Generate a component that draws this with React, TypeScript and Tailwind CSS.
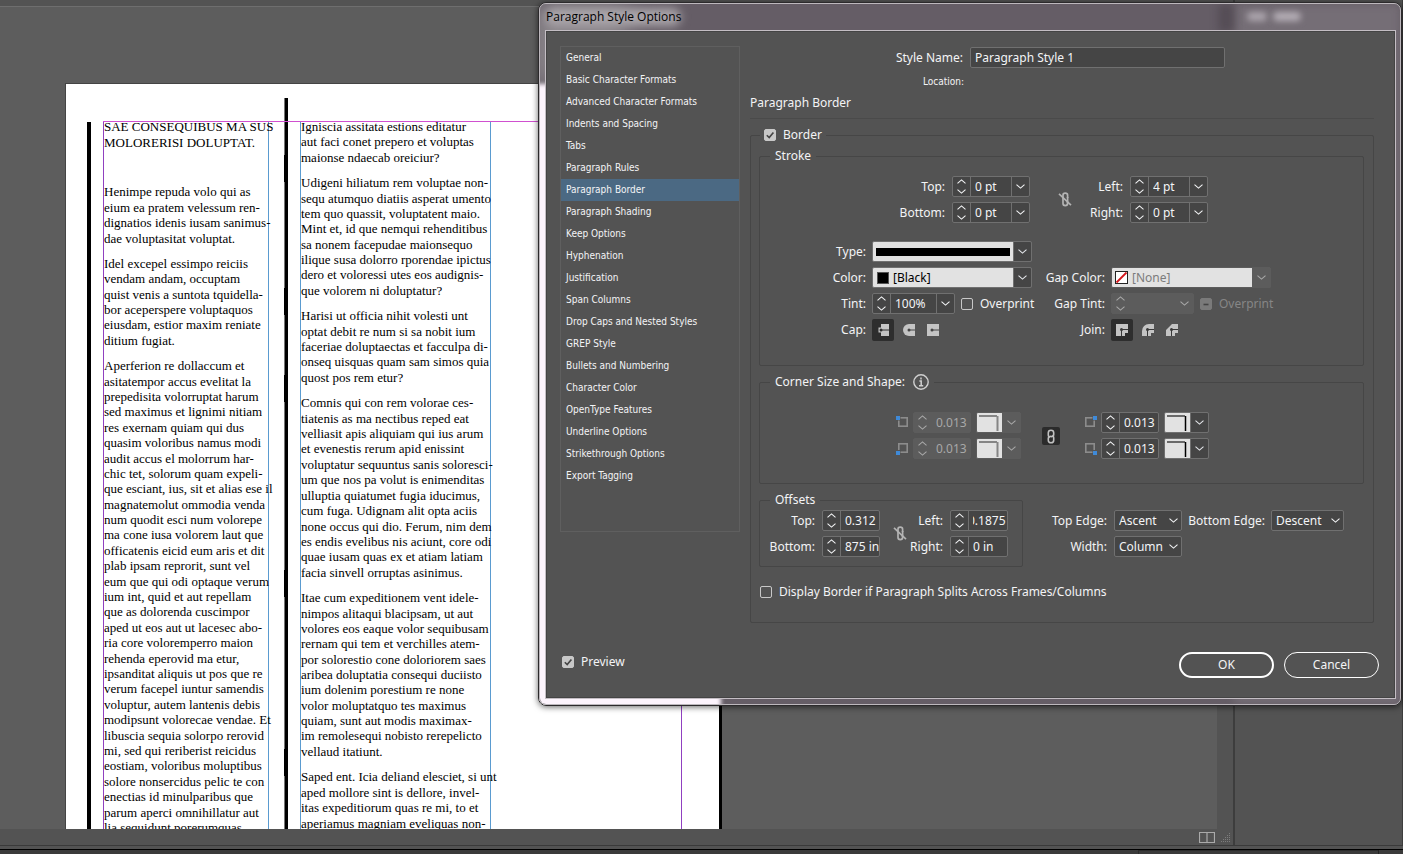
import { ReactNode } from "react";

const categories = [
  "General",
  "Basic Character Formats",
  "Advanced Character Formats",
  "Indents and Spacing",
  "Tabs",
  "Paragraph Rules",
  "Paragraph Border",
  "Paragraph Shading",
  "Keep Options",
  "Hyphenation",
  "Justification",
  "Span Columns",
  "Drop Caps and Nested Styles",
  "GREP Style",
  "Bullets and Numbering",
  "Character Color",
  "OpenType Features",
  "Underline Options",
  "Strikethrough Options",
  "Export Tagging",
];

const headline = ["SAE CONSEQUIBUS MA SUS", "MOLORERISI DOLUPTAT."];

const leftColumn = [
  [
    "Henimpe repuda volo qui as",
    "eium ea pratem velessum ren-",
    "dignatios idenis iusam sanimus-",
    "dae voluptasitat voluptat.",
  ],
  [
    "Idel excepel essimpo reiciis",
    "vendam andam, occuptam",
    "quist venis a suntota tquidella-",
    "bor aceperspere voluptaquos",
    "eiusdam, estior maxim reniate",
    "ditium fugiat.",
  ],
  [
    "Aperferion re dollaccum et",
    "asitatempor accus evelitat la",
    "prepedisita volorruptat harum",
    "sed maximus et lignimi nitiam",
    "res exernam quiam qui dus",
    "quasim voloribus namus modi",
    "audit accus el molorrum har-",
    "chic tet, solorum quam expeli-",
    "que esciant, ius, sit et alias ese il",
    "magnatemolut ommodia venda",
    "num quodit esci num volorepe",
    "ma cone iusa volorem laut que",
    "officatenis eicid eum aris et dit",
    "plab ipsam reprorit, sunt vel",
    "eum que qui odi optaque verum",
    "ium int, quid et aut repellam",
    "que as dolorenda cuscimpor",
    "aped ut eos aut ut lacesec abo-",
    "ria core voloremperro maion",
    "rehenda eperovid ma etur,",
    "ipsanditat aliquis ut pos que re",
    "verum facepel iuntur samendis",
    "voluptur, autem lantenis debis",
    "modipsunt volorecae vendae. Et",
    "libuscia sequia solorpo rerovid",
    "mi, sed qui reriberist reicidus",
    "eostiam, voloribus moluptibus",
    "solore nonsercidus pelic te con",
    "enectias id minulparibus que",
    "parum aperci omnihillatur aut",
    "lia sequidunt porerumquas",
  ],
];

const rightColumn = [
  ["Igniscia assitata estions editatur", "aut faci conet prepero et voluptas", "maionse ndaecab oreiciur?"],
  [
    "Udigeni hiliatum rem voluptae non-",
    "sequ atumquo diatiis asperat umento",
    "tem quo quassit, voluptatent maio.",
    "Mint et, id que nemqui rehenditibus",
    "sa nonem facepudae maionsequo",
    "ilique susa dolorro rporendae ipictus",
    "dero et voloressi utes eos audignis-",
    "que volorem ni doluptatur?",
  ],
  [
    "Harisi ut officia nihit volesti unt",
    "optat debit re num si sa nobit ium",
    "faceriae doluptaectas et facculpa di-",
    "onseq uisquas quam sam simos quia",
    "quost pos rem etur?",
  ],
  [
    "Comnis qui con rem volorae ces-",
    "tiatenis as ma nectibus reped eat",
    "velliasit apis aliquiam qui ius arum",
    "et evenestis rerum apid enissint",
    "voluptatur sequuntus sanis soloresci-",
    "um que nos pa volut is enimenditas",
    "ulluptia quiatumet fugia iducimus,",
    "cum fuga. Udignam alit opta aciis",
    "none occus qui dio. Ferum, nim dem",
    "es endis evelibus nis aciunt, core odi",
    "quae iusam quas ex et atiam latiam",
    "facia sinvell orruptas asinimus.",
  ],
  [
    "Itae cum expeditionem vent idele-",
    "nimpos alitaqui blacipsam, ut aut",
    "volores eos eaque volor sequibusam",
    "rernam qui tem et verchilles atem-",
    "por solorestio cone doloriorem saes",
    "aribea doluptatia consequi duciisto",
    "ium dolenim porestium re none",
    "volor moluptatquo tes maximus",
    "quiam, sunt aut modis maximax-",
    "im remolesequi nobisto rerepelicto",
    "vellaud itatiunt.",
  ],
  [
    "Saped ent. Icia deliand elesciet, si unt",
    "aped mollore sint is dellore, invel-",
    "itas expeditiorum quas re mi, to et",
    "aperiamus magniam eveliquas non-",
  ],
];

// Leading is 77px for every five lines
function Lines({ lines, overlap = false }: { lines: string[]; overlap?: boolean }) {
  return (
    <p className="relative flex shrink-0 flex-col" style={{ height: Math.round((lines.length * 77) / 5) }}>
      {overlap && <span className="absolute -left-[17px] -top-[20px] h-[27px] w-1 bg-black" />}
      {lines.map((line) => (
        <span key={line} className="flex min-h-0 flex-1 items-center whitespace-nowrap leading-none">
          {line}
        </span>
      ))}
    </p>
  );
}

function Chevron({ up = false }: { up?: boolean }) {
  return (
    <svg width="9" height="5" viewBox="0 0 9 5" fill="none" stroke="currentColor" strokeWidth="1.1">
      <path d={up ? "M0.5 4.3 4.5 0.9 8.5 4.3" : "M0.5 0.7 4.5 4.1 8.5 0.7"} />
    </svg>
  );
}

function Steps({ disabled = false }: { disabled?: boolean }) {
  return (
    <span className="flex w-[17px] shrink-0 flex-col items-center justify-center gap-[5px]">
      <button type="button" aria-label="Increase" disabled={disabled}>
        <Chevron up />
      </button>
      <button type="button" aria-label="Decrease" disabled={disabled}>
        <Chevron />
      </button>
    </span>
  );
}

type NumberBoxProps = {
  id: string;
  value: string;
  label?: string;
  menu?: boolean;
  disabled?: boolean;
  size?: string;
  scroll?: number;
};

function NumberBox({ id, value, label, menu, disabled, size = "w-[58px]", scroll = 0 }: NumberBoxProps) {
  const frame = disabled ? "border-[#5c5c5c] bg-[#5c5c5c] text-[#a8a8a8]" : "border-[#707070] bg-[#454545] text-gray-100";
  const line = disabled ? "border-[#5c5c5c]" : "border-[#707070]";
  return (
    <span className={`flex h-[21px] shrink-0 rounded-xs border ${frame} ${size}`}>
      <Steps disabled={disabled} />
      <input
        id={id}
        aria-label={label}
        defaultValue={value}
        disabled={disabled}
        ref={(el) => {
          if (el) el.scrollLeft = scroll;
        }}
        className={`w-0 min-w-0 flex-1 border-l pl-1 leading-[19px] outline-none ${line}`}
      />
      {menu && (
        <button
          type="button"
          aria-label="Presets"
          disabled={disabled}
          className={`flex w-[18px] shrink-0 items-center justify-center border-l ${line}`}
        >
          <Chevron />
        </button>
      )}
    </span>
  );
}

// Light drop-down with a drawn preview on its face
type SwatchSelectProps = {
  id: string;
  label?: string;
  options: string[];
  size?: string;
  disabled?: boolean;
  text?: string;
  children: ReactNode;
};

function SwatchSelect({ id, label, options, size = "w-[160px]", disabled, text = "", children }: SwatchSelectProps) {
  return (
    <span className={`relative flex h-[21px] shrink-0 ${size}`}>
      <select
        id={id}
        aria-label={label}
        disabled={disabled}
        className={`h-full w-full appearance-none rounded-xs border bg-[#e2e2e2] pl-5 opacity-100 outline-none ${
          disabled ? "border-[#5c5c5c]" : "border-[#707070]"
        } ${text}`}
      >
        {options.map((o) => (
          <option key={o}>{o}</option>
        ))}
      </select>
      <span className="pointer-events-none absolute inset-y-0 left-0 right-[19px] flex items-center">{children}</span>
      <span
        className={`pointer-events-none absolute inset-y-0 right-0 flex w-[19px] items-center justify-center rounded-r-xs border ${
          disabled ? "border-[#5c5c5c] bg-[#5c5c5c] text-[#a8a8a8]" : "border-[#707070] bg-[#454545] text-gray-200"
        }`}
      >
        <Chevron />
      </span>
    </span>
  );
}

function CornerSelect({ id, disabled }: { id: string; disabled?: boolean }) {
  return (
    <SwatchSelect id={id} label="Corner shape" options={[""]} size="w-[45px]" disabled={disabled}>
      <svg className="ml-[2px]" width="22" height="17" viewBox="0 0 22 17" fill="none">
        <path d="M1 2h18" stroke={disabled ? "#858585" : "#6a6a6a"} strokeWidth="2" />
        <path d="M19.5 2v15" stroke={disabled ? "#858585" : "#000"} strokeWidth={disabled ? 2 : 1.5} />
      </svg>
    </SwatchSelect>
  );
}

function PlainSelect({ id, value, size }: { id: string; value: string; size: string }) {
  return (
    <span className={`relative flex h-[21px] shrink-0 ${size}`}>
      <select
        id={id}
        className="h-full w-full appearance-none rounded-xs border border-[#707070] bg-[#454545] pl-1 text-gray-100 outline-none"
      >
        <option>{value}</option>
      </select>
      <span className="pointer-events-none absolute inset-y-0 right-1 flex items-center">
        <Chevron />
      </span>
    </span>
  );
}

function Check({ id, label, checked, disabled }: { id: string; label: string; checked?: boolean; disabled?: boolean }) {
  return (
    <span className="flex items-center gap-[7px]">
      <span className="relative flex">
        <input
          id={id}
          type="checkbox"
          defaultChecked={checked}
          disabled={disabled}
          className="size-3 appearance-none rounded-xs border border-[#c8c8c8] checked:bg-[#c8c8c8] disabled:border-[#7a7a7a] disabled:bg-[#7a7a7a]"
        />
        <svg className="pointer-events-none absolute inset-0" width="12" height="12" viewBox="0 0 12 12" fill="none" stroke="#444">
          {checked && <path d="M2.8 6.2 5.2 8.6 9.4 3.4" strokeWidth="1.6" />}
          {disabled && <path d="M3.5 6.5h5" strokeWidth="1.6" />}
        </svg>
      </span>
      <label htmlFor={id} className={disabled ? "text-[#868686]" : ""}>
        {label}
      </label>
    </span>
  );
}

function Label({ id, size, children }: { id: string; size: string; children: string }) {
  return (
    <label htmlFor={id} className={`shrink-0 whitespace-nowrap text-right ${size}`}>
      {children}
    </label>
  );
}

function Row({ children }: { children: ReactNode }) {
  return <div className="flex h-[26px] items-center pb-px">{children}</div>;
}

function Unlinked() {
  return (
    <button type="button" aria-label="Make all settings the same" className="flex size-4 items-center justify-center">
      <svg width="14" height="16" viewBox="0 0 14 16" fill="none" stroke="#b4b4b4" strokeWidth="1.7">
        <path d="M5 5V3.2C5 2 5.8 1.2 7.2 1.2S9.6 2 9.6 3.2V6" />
        <path d="M5 9v2.6c0 1.2.8 2 2.2 2s2.4-.8 2.4-2V9.8" />
        <path d="M5 5v4M9.6 5v6" />
        <path d="M1 1.8 13 13.2" strokeWidth="1.6" />
      </svg>
    </button>
  );
}

function Linked() {
  return (
    <button type="button" aria-label="Make all corners the same" className="flex size-[18px] items-center justify-center rounded-xs bg-[#2b2b2b]">
      <svg width="10" height="15" viewBox="0 0 10 15" fill="none" stroke="#c0c0c0" strokeWidth="1.6">
        <path d="M3.6 8.4C2.6 8 2.3 7.3 2.3 6.2V3.8C2.3 2.2 3.4 1.2 5 1.2s2.7 1 2.7 2.6v1.6c0 1.6-1 2.2-2.7 2.2" />
        <path d="M6.4 6.6c1 .4 1.3 1.1 1.3 2.2v2.4c0 1.6-1.1 2.6-2.7 2.6s-2.7-1-2.7-2.6V9.6C2.3 8 3.3 7.4 5 7.4" />
      </svg>
    </button>
  );
}

// Square with its active corner marked
function CornerIcon({ right, bottom }: { right?: boolean; bottom?: boolean }) {
  return (
    <svg width="12" height="13" viewBox="0 0 12 13" className="shrink-0">
      <rect x={right ? 0.8 : 2.8} y={bottom ? 1.8 : 1.8} width="8.4" height="8.4" fill="none" stroke="#8c8c8c" strokeWidth="1.6" />
      <rect x={right ? 7.5 : -0.5} y={bottom ? 8 : -0.5} width="5" height="5" fill="#535353" />
      <rect x={right ? 8 : 0} y={bottom ? 9 : 0} width="4" height="4" fill="#3f8ad8" />
    </svg>
  );
}

function IconButton({ label, active, children }: { label: string; active?: boolean; children: ReactNode }) {
  return (
    <button
      type="button"
      aria-label={label}
      className={`flex h-[22px] items-center justify-center rounded-xs ${active ? "w-[22px] bg-[#2e2e2e]" : "w-[18px]"}`}
    >
      <svg width="14" height="14" viewBox="0 0 14 14" fill="#c4c4c4">
        {children}
      </svg>
    </button>
  );
}

function CapIcons() {
  return (
    <span className="flex items-center gap-[6px]">
      <IconButton label="Butt cap" active>
        <path d="M5 1h8v12H5zM2.5 4.5h4v5h-4z" />
        <circle cx="5" cy="7" r="1.5" fill="#2e2e2e" />
        <path d="M5 7h8" stroke="#2e2e2e" />
      </IconButton>
      <IconButton label="Round cap">
        <path d="M13 1H7a6 6 0 0 0 0 12h6z" />
        <circle cx="7" cy="7" r="1.5" fill="#444" />
        <path d="M7 7h6" stroke="#444" />
      </IconButton>
      <IconButton label="Projecting cap">
        <path d="M1 1h12v12H1z" />
        <circle cx="6" cy="7" r="1.5" fill="#444" />
        <path d="M6 7h7" stroke="#444" />
      </IconButton>
    </span>
  );
}

function JoinIcons() {
  const centre = (
    <>
      <circle cx="6.5" cy="6.5" r="1.5" fill="#383838" />
      <path d="M13 6.5H6.5V13" fill="none" stroke="#383838" />
    </>
  );
  return (
    <span className="flex items-center gap-[6px]">
      <IconButton label="Miter join" active>
        <path d="M1 1h12v9h-3v3H1z" />
        {centre}
      </IconButton>
      <IconButton label="Round join">
        <path d="M13 1H8a7 7 0 0 0-7 7v5h9v-3h3z" />
        {centre}
      </IconButton>
      <IconButton label="Bevel join">
        <path d="M13 1H7L1 7v6h9v-3h3z" />
        {centre}
      </IconButton>
    </span>
  );
}

function StrokeGroup() {
  return (
    <fieldset className="min-w-0 rounded-xs border border-[#464646] pb-[22px]">
      <legend className="ml-[10px] h-4 px-[5px] leading-4">Stroke</legend>
      <div className="flex items-center pt-[10px]">
        <div>
          <Row>
            <Label id="stroke-top" size="w-[185px] mr-[7px]">Top:</Label>
            <NumberBox id="stroke-top" value="0 pt" menu size="w-[78px]" />
          </Row>
          <Row>
            <Label id="stroke-bottom" size="w-[185px] mr-[7px]">Bottom:</Label>
            <NumberBox id="stroke-bottom" value="0 pt" menu size="w-[78px]" />
          </Row>
        </div>
        <div className="ml-[27px]">
          <Unlinked />
        </div>
        <div>
          <Row>
            <Label id="stroke-left" size="w-[50px] mr-[7px]">Left:</Label>
            <NumberBox id="stroke-left" value="4 pt" menu size="w-[78px]" />
          </Row>
          <Row>
            <Label id="stroke-right" size="w-[50px] mr-[7px]">Right:</Label>
            <NumberBox id="stroke-right" value="0 pt" menu size="w-[78px]" />
          </Row>
        </div>
      </div>
      <div className="flex pt-[13px]">
        <div className="w-[272px]">
          <Row>
            <Label id="type" size="w-[106px] mr-[6px]">Type:</Label>
            <SwatchSelect id="type" options={[""]}>
              <span className="ml-1 mr-[3px] h-2 flex-1 bg-black" />
            </SwatchSelect>
          </Row>
          <Row>
            <Label id="color" size="w-[106px] mr-[6px]">Color:</Label>
            <SwatchSelect id="color" options={["[Black]"]} text="text-black">
              <span className="ml-[5px] size-3 border border-[#555] bg-black" />
            </SwatchSelect>
          </Row>
          <Row>
            <Label id="tint" size="w-[106px] mr-[6px]">Tint:</Label>
            <NumberBox id="tint" value="100%" menu size="w-[83px] mr-[6px]" />
            <Check id="overprint" label="Overprint" />
          </Row>
          <Row>
            <span className="mr-[6px] w-[106px] text-right">Cap:</span>
            <CapIcons />
          </Row>
        </div>
        <div>
          <Row>{null}</Row>
          <Row>
            <Label id="gap-color" size="w-[73px] mr-[6px]">Gap Color:</Label>
            <SwatchSelect id="gap-color" options={["[None]"]} disabled text="text-[#7c7c7c]">
              <svg className="ml-1" width="13" height="13" viewBox="0 0 13 13">
                <rect x="0.5" y="0.5" width="12" height="12" fill="#fff" stroke="#222" />
                <path d="M1.5 11.5 11.5 1.5" stroke="#d4151b" strokeWidth="1.8" />
              </svg>
            </SwatchSelect>
          </Row>
          <Row>
            <Label id="gap-tint" size="w-[73px] mr-[6px]">Gap Tint:</Label>
            <NumberBox id="gap-tint" value="" menu disabled size="w-[83px] mr-[6px]" />
            <Check id="gap-overprint" label="Overprint" disabled />
          </Row>
          <Row>
            <span className="mr-[6px] w-[73px] text-right">Join:</span>
            <JoinIcons />
          </Row>
        </div>
      </div>
    </fieldset>
  );
}

function CornerGroup() {
  return (
    <fieldset className="mt-2 min-w-0 rounded-xs border border-[#464646] pb-[21px]">
      <legend className="ml-[10px] flex h-4 items-center gap-2 px-[5px] leading-4">
        Corner Size and Shape:
        <svg width="16" height="16" viewBox="0 0 16 16" fill="none" stroke="#d0d0d0">
          <circle cx="8" cy="8" r="7.2" strokeWidth="1.4" />
          <path d="M6.4 7h1.8v4.6M6 11.7h4.2M8 3.6v1.8" strokeWidth="1.5" />
        </svg>
      </legend>
      <div className="flex items-center pt-5">
        <div className="ml-[136px]">
          <Row>
            <CornerIcon />
            <span className="w-[5px]" />
            <NumberBox id="corner-tl" label="Top left size" value="0.013" disabled />
            <span className="w-[5px]" />
            <CornerSelect id="shape-tl" disabled />
          </Row>
          <Row>
            <CornerIcon bottom />
            <span className="w-[5px]" />
            <NumberBox id="corner-bl" label="Bottom left size" value="0.013" disabled />
            <span className="w-[5px]" />
            <CornerSelect id="shape-bl" disabled />
          </Row>
        </div>
        <div className="ml-[21px] mr-[25px]">
          <Linked />
        </div>
        <div>
          <Row>
            <CornerIcon right />
            <span className="w-1" />
            <NumberBox id="corner-tr" label="Top right size" value="0.013" />
            <span className="w-[5px]" />
            <CornerSelect id="shape-tr" />
          </Row>
          <Row>
            <CornerIcon right bottom />
            <span className="w-1" />
            <NumberBox id="corner-br" label="Bottom right size" value="0.013" />
            <span className="w-[5px]" />
            <CornerSelect id="shape-br" />
          </Row>
        </div>
      </div>
    </fieldset>
  );
}

function OffsetsGroup() {
  return (
    <div className="mt-2 flex items-start">
      <fieldset className="w-[264px] min-w-0 shrink-0 rounded-xs border border-[#464646] pb-[6px]">
        <legend className="ml-[10px] h-4 px-[5px] leading-4">Offsets</legend>
        <div className="flex items-center">
          <div>
            <Row>
              <Label id="offset-top" size="w-[55px] mr-[7px]">Top:</Label>
              <NumberBox id="offset-top" value="0.312" />
            </Row>
            <Row>
              <Label id="offset-bottom" size="w-[55px] mr-[7px]">Bottom:</Label>
              <NumberBox id="offset-bottom" value="0.1875 in" scroll={99} />
            </Row>
          </div>
          <div className="ml-3">
            <Unlinked />
          </div>
          <div>
            <Row>
              <Label id="offset-left" size="w-[35px] mr-[7px]">Left:</Label>
              <NumberBox id="offset-left" value="0.1875 in" scroll={5} />
            </Row>
            <Row>
              <Label id="offset-right" size="w-[35px] mr-[7px]">Right:</Label>
              <NumberBox id="offset-right" value="0 in" />
            </Row>
          </div>
        </div>
      </fieldset>
      <div className="pt-4">
        <Row>
          <Label id="top-edge" size="w-[84px] mr-[7px]">Top Edge:</Label>
          <PlainSelect id="top-edge" value="Ascent" size="w-[68px]" />
          <Label id="bottom-edge" size="w-[83px] mr-[6px]">Bottom Edge:</Label>
          <PlainSelect id="bottom-edge" value="Descent" size="w-[73px]" />
        </Row>
        <Row>
          <Label id="width" size="w-[84px] mr-[7px]">Width:</Label>
          <PlainSelect id="width" value="Column" size="w-[68px]" />
        </Row>
      </div>
    </div>
  );
}

function StyleDialog() {
  return (
    <div
      role="dialog"
      aria-label="Paragraph Style Options"
      className="absolute left-[538px] right-px top-[2px] rounded-lg border border-[#2c2a2c] shadow-[0_1px_6px_rgba(0,0,0,0.6)]"
    >
      <div className="relative overflow-hidden rounded-[7px] border border-[#bdb8bd] bg-[#655d66] pb-[5px] pl-[5px] pr-1">
        {/* Glass reflections of what lies behind the frame */}
        <div className="absolute -left-2 top-0 h-20 w-24 bg-[#8a858a] blur-md" />
        <div className="absolute -bottom-2 -left-2 top-20 w-[189px] bg-[#fdf4fd] blur-[2px]" />
        <div className="absolute right-0 top-0 h-full w-[166px] bg-[#756e76] blur-xs" />
        <div className="absolute right-[166px] top-0 h-7 w-4 bg-[#554d56] blur-xs" />
        <div className="absolute right-[133px] top-2 h-[9px] w-5 rounded-full bg-[#aca5ad] blur-[3px]" />
        <div className="absolute right-[99px] top-2 h-[9px] w-7 rounded-full bg-[#b5aeb6] blur-[3px]" />

        <div className="relative flex h-[26px] items-center pl-px">
          <div className="absolute left-0 top-1 h-[18px] w-[136px] rounded-full bg-[#aaa5aa] blur-[5px]" />
          <h1 className="relative font-['Open_Sans',sans-serif] text-xs text-black">Paragraph Style Options</h1>
        </div>

        <div className="relative border border-[#c4bec4] bg-[#535353]">
          <form className="border border-[#444]" onSubmit={(e) => e.preventDefault()}>
            <div className="flex gap-[10px] pl-[13px] pr-5 pt-[14px]">
              <nav className="h-[486px] w-[180px] shrink-0 border border-[#5f5f5f] font-['DejaVu_Sans_Condensed','Noto_Sans',sans-serif] text-[10px]">
                {categories.map((name) => (
                  <a
                    key={name}
                    href="#"
                    className={`flex h-[22px] items-center pl-[5px] ${name === "Paragraph Border" ? "bg-[#4b6983]" : ""}`}
                  >
                    {name}
                  </a>
                ))}
              </nav>
              <div className="min-w-0 flex-1 pt-px">
                <div className="flex items-center">
                  <Label id="style-name" size="w-[213px] mr-[7px]">Style Name:</Label>
                  <input
                    id="style-name"
                    defaultValue="Paragraph Style 1"
                    className="h-[21px] w-[255px] rounded-xs border border-[#707070] bg-[#454545] px-1 outline-none"
                  />
                </div>
                <div className="flex h-7 w-[214px] items-center justify-end font-['DejaVu_Sans_Condensed','Noto_Sans',sans-serif] text-[10px]">
                  Location:
                </div>
                <h2 className="border-b border-[#4a4a4a] pb-2 leading-[14px]">Paragraph Border</h2>
                <fieldset className="mt-2 min-w-0 rounded-xs border border-[#464646] pb-5 pl-2 pr-[9px]">
                  <legend className="ml-px flex h-4 items-center px-1 leading-4">
                    <Check id="border" label="Border" checked />
                  </legend>
                  <div className="pt-[5px]">
                    <StrokeGroup />
                    <CornerGroup />
                    <OffsetsGroup />
                    <div className="mt-[15px] flex h-5 items-center pl-px">
                      <Check id="split" label="Display Border if Paragraph Splits Across Frames/Columns" />
                    </div>
                  </div>
                </fieldset>
              </div>
            </div>
            <div className="flex items-start justify-between pb-[19px] pl-[15px] pr-[15px] pt-[29px]">
              <div className="flex h-5 items-center">
                <Check id="preview" label="Preview" checked />
              </div>
              <div className="flex gap-[10px]">
                <button type="submit" className="h-[26px] w-[95px] rounded-full border-2 border-white">
                  OK
                </button>
                <button type="button" className="h-[26px] w-[95px] rounded-full border border-white">
                  Cancel
                </button>
              </div>
            </div>
          </form>
        </div>
      </div>
    </div>
  );
}

function DocumentPage() {
  return (
    <div className="relative ml-[65px] mt-[76px] flex min-h-0 w-[657px] flex-1 items-stretch overflow-hidden border-l border-r-[3px] border-t border-l-[#444] border-r-black border-t-[#444] bg-white pl-[21px] font-['Liberation_Serif',serif] text-[13px] text-black">
      <div className="mt-[38px] flex border-l-4 border-black pl-3">
        <div className="flex w-[166px] flex-col gap-[10px] border-l border-r border-l-[#9040c0] border-r-[#5a9bd0]">
          <div className="-mt-[3px] pb-6">
            <Lines lines={headline} />
          </div>
          {leftColumn.map((lines) => (
            <Lines key={lines[0]} lines={lines} />
          ))}
        </div>
      </div>
      <div className="ml-4 mt-[14px] flex border-l-[3px] border-black pl-3 pt-6 shadow-[-1px_0_0_#777]">
        <div className="w-[191px] border-l border-r border-[#5a9bd0]">
          <div className="-mt-[3px] flex flex-col gap-[10px]">
            {rightColumn.map((lines, i) => (
              <Lines key={lines[0]} lines={lines} overlap={i > 0} />
            ))}
          </div>
        </div>
      </div>
      {/* Margin guides */}
      <div className="absolute left-[37px] right-[37px] top-[37px] h-px bg-[#d050d0]" />
      <div className="absolute bottom-0 right-[37px] top-[37px] w-px bg-[#9040c0]" />
    </div>
  );
}

export default function App() {
  return (
    <div className="relative flex h-screen flex-col overflow-hidden bg-[#3a3a3a] font-['Noto_Sans',sans-serif] text-xs text-gray-100">
      <div className="flex min-h-0 flex-1 border-b border-[#3a3a3a] bg-[#535353]">
        <div className="flex min-w-0 flex-1 flex-col border-r-2 border-[#3d3d3d]">
          <div className="h-[7px] shrink-0 border-b border-[#6e6e6e]" />
          <div className="flex min-h-0 flex-1">
            <main className="flex min-w-0 flex-1 flex-col bg-[#5d5d5d]">
              <DocumentPage />
            </main>
            <div className="w-4 shrink-0" />
          </div>
          <div className="flex h-4 shrink-0 items-center justify-end gap-[6px] pr-[2px]">
            <button type="button" aria-label="Split layout view">
              <svg width="16" height="11" viewBox="0 0 16 11" fill="none" stroke="#aaa">
                <path d="M0.5 0.5h15v10H0.5zM8 0.5v10" strokeWidth="1.2" />
              </svg>
            </button>
            <svg width="10" height="10" viewBox="0 0 10 10" stroke="#7d7d7d" strokeDasharray="1 1">
              <path d="M8 1.5h1M6 3.5h3M4 5.5h5M2 7.5h7M0 9.5h9" />
            </svg>
          </div>
        </div>
        <div className="w-[168px] shrink-0 border-r border-[#3d3d3d]" />
      </div>
      <div className="h-1 shrink-0 border-b border-black bg-[#535353]" />
      <div className="flex h-1 shrink-0 justify-end">
        <div className="w-[240px] border-l border-t border-[#2c2c2c]" />
        <div className="w-[25px] border-l border-[#222]" />
      </div>
      <StyleDialog />
    </div>
  );
}
